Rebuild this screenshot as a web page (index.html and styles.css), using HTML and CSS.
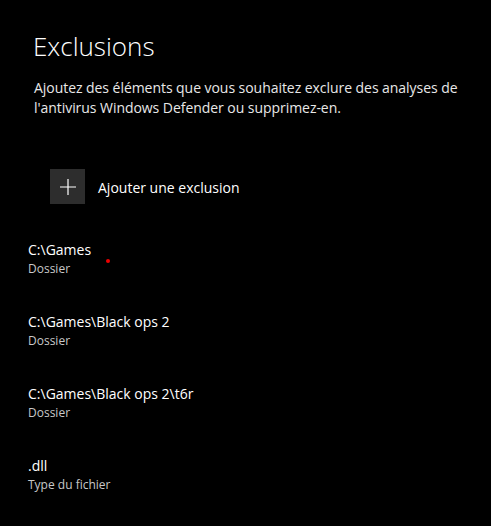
FILE: index.html
```html
<!DOCTYPE html>
<html lang="fr">
  <head>
    <meta charset="UTF-8" />
    <meta name="viewport" content="width=device-width, initial-scale=1.0" />
    <title>Exclusions</title>
    <link rel="stylesheet" href="styles.css">
  </head>
  <body>
    <div class="page">
      <h1>Exclusions</h1>
      <p class="desc">Ajoutez des éléments que vous souhaitez exclure des analyses de l'antivirus Windows Defender ou supprimez-en.</p>
      <button class="add">
        <span class="plus">
          <svg width="16" height="16" viewBox="0 0 16 16">
            <path d="M8 0V16M0 8H16" stroke="#fff" stroke-width="1.2" fill="none" />
          </svg>
        </span>
        <span class="add-label">Ajouter une exclusion</span>
      </button>
      <ul class="list">
        <li>
          <div class="name">C:\Games</div>
          <div class="type">Dossier</div>
          <span class="dot"></span>
        </li>
        <li>
          <div class="name">C:\Games\Black ops 2</div>
          <div class="type">Dossier</div>
        </li>
        <li>
          <div class="name">C:\Games\Black ops 2\t6r</div>
          <div class="type">Dossier</div>
        </li>
        <li>
          <div class="name">.dll</div>
          <div class="type">Type du fichier</div>
        </li>
      </ul>
    </div>
  </body>
</html>
```

FILE: styles.css
```css
* {
  margin: 0;
  padding: 0;
  box-sizing: border-box;
}
html,
body {
  background: #000;
  height: 100%;
}
body {
  font-family: "Open Sans", "Noto Sans", sans-serif;
  color: #fff;
}
.page {
  padding: 28px 20px 0 28px;
}
h1 {
  font-weight: 300;
  font-size: 26px;
  line-height: 36px;
  margin-left: 5px;
}
.desc {
  font-size: 14px;
  line-height: 20px;
  letter-spacing: -0.05px;
  color: #e8e8e8;
  margin: 14px 0 0 6px;
  width: 440px;
}
.add {
  display: flex;
  align-items: center;
  background: none;
  border: 0;
  color: #fff;
  font-family: inherit;
  margin: 51px 0 0 22px;
}
.plus {
  width: 35px;
  height: 35px;
  background: #2d2d2d;
  display: flex;
  align-items: center;
  justify-content: center;
}
.add-label {
  font-size: 14px;
  margin: 2px 0 0 13px;
}
.list {
  list-style: none;
  margin-top: 35px;
}
.list li {
  position: relative;
  height: 72px;
}
.name {
  font-size: 14px;
  line-height: 22px;
}
.type {
  font-size: 12px;
  line-height: 16px;
  color: #c8c8c8;
}
.dot {
  position: absolute;
  left: 78px;
  top: 20px;
  width: 4px;
  height: 4px;
  border-radius: 50%;
  background: #e00;
}
```
